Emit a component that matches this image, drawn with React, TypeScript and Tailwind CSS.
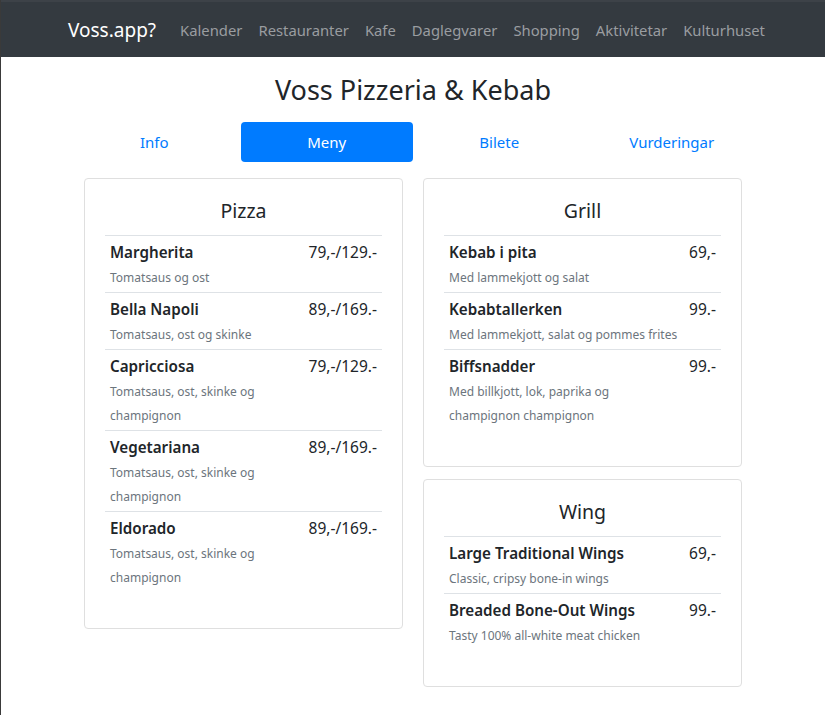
import React from "react";

type MenuItem = {
  name: string;
  desc: string;
  price: string;
};

type MenuSection = {
  title: string;
  items: MenuItem[];
};

const NAV_LINKS = [
  "Kalender",
  "Restauranter",
  "Kafe",
  "Daglegvarer",
  "Shopping",
  "Aktivitetar",
  "Kulturhuset",
];

const TABS = ["Info", "Meny", "Bilete", "Vurderingar"];

const PIZZA: MenuSection = {
  title: "Pizza",
  items: [
    { name: "Margherita", desc: "Tomatsaus og ost", price: "79,-/129.-" },
    { name: "Bella Napoli", desc: "Tomatsaus, ost og skinke", price: "89,-/169.-" },
    {
      name: "Capricciosa",
      desc: "Tomatsaus, ost, skinke og champignon",
      price: "79,-/129.-",
    },
    {
      name: "Vegetariana",
      desc: "Tomatsaus, ost, skinke og champignon",
      price: "89,-/169.-",
    },
    {
      name: "Eldorado",
      desc: "Tomatsaus, ost, skinke og champignon",
      price: "89,-/169.-",
    },
  ],
};

const GRILL: MenuSection = {
  title: "Grill",
  items: [
    { name: "Kebab i pita", desc: "Med lammekjott og salat", price: "69,-" },
    {
      name: "Kebabtallerken",
      desc: "Med lammekjott, salat og pommes frites",
      price: "99.-",
    },
    {
      name: "Biffsnadder",
      desc: "Med billkjott, lok, paprika og champignon champignon",
      price: "99.-",
    },
  ],
};

const WING: MenuSection = {
  title: "Wing",
  items: [
    {
      name: "Large Traditional Wings",
      desc: "Classic, cripsy bone-in wings",
      price: "69,-",
    },
    {
      name: "Breaded Bone-Out Wings",
      desc: "Tasty 100% all-white meat chicken",
      price: "99.-",
    },
  ],
};

function MenuCard({ section, className = "" }: { section: MenuSection; className?: string }) {
  return (
    <div className={`rounded-[4px] border border-[#dfdfdf] bg-white p-5 ${className}`}>
      <h4 className="mb-3 text-center text-[19.5px] leading-[24px] font-normal text-[#212529]">
        {section.title}
      </h4>
      <div className="mb-4">
        {section.items.map((item) => (
          <div
            key={item.name}
            className="flex border-t border-[#dee2e6] px-[5px] pt-[4px] pb-[2px]"
          >
            <div className="min-w-0 flex-1 pr-[8px]">
              <div className="text-[15.2px] leading-[24px] font-semibold text-[#212529]">
                {item.name}
              </div>
              <div className="pt-[2px] text-[12px] leading-[24px] text-[#6c757d]">
                {item.desc}
              </div>
            </div>
            <div className="shrink-0 text-[15.5px] leading-[24px] text-[#212529]">
              {item.price}
            </div>
          </div>
        ))}
      </div>
    </div>
  );
}

export default function App() {
  return (
    <div className="min-h-[715px] border-l border-[#3a3a3a] bg-white font-['Noto_Sans','Open_Sans',sans-serif] text-[#212529]">
      {/* Top navbar */}
      <nav className="h-[57px] border-t-2 border-[#3d4248] bg-[#343a40]">
        <div className="mx-auto flex h-full w-[690px] items-center">
          <span className="mr-4 text-[19px] leading-[30px] text-white">Voss.app?</span>
          {NAV_LINKS.map((link) => (
            <span key={link} className="px-2 text-[14.8px] leading-[24px] text-[#9a9da0]">
              {link}
            </span>
          ))}
        </div>
      </nav>

      <main className="mx-auto w-[690px]">
        <h2 className="pt-[16px] text-center text-[27px] leading-[34px] font-normal text-[#212529]">
          Voss Pizzeria &amp; Kebab
        </h2>

        {/* Tabs */}
        <div className="mt-[15px] flex">
          {TABS.map((tab) => (
            <div
              key={tab}
              className={`flex h-[40px] flex-1 items-center justify-center rounded-[4px] text-[15px] ${
                tab === "Meny" ? "bg-[#007bff] text-white" : "text-[#007bff]"
              }`}
            >
              {tab}
            </div>
          ))}
        </div>

        {/* Menu cards */}
        <div className="mt-[16px] flex justify-center gap-[20px]">
          <div className="w-[319px]">
            <MenuCard section={PIZZA} />
          </div>
          <div className="w-[319px]">
            <MenuCard section={GRILL} className="mb-[12px]" />
            <MenuCard section={WING} />
          </div>
        </div>
      </main>
    </div>
  );
}
